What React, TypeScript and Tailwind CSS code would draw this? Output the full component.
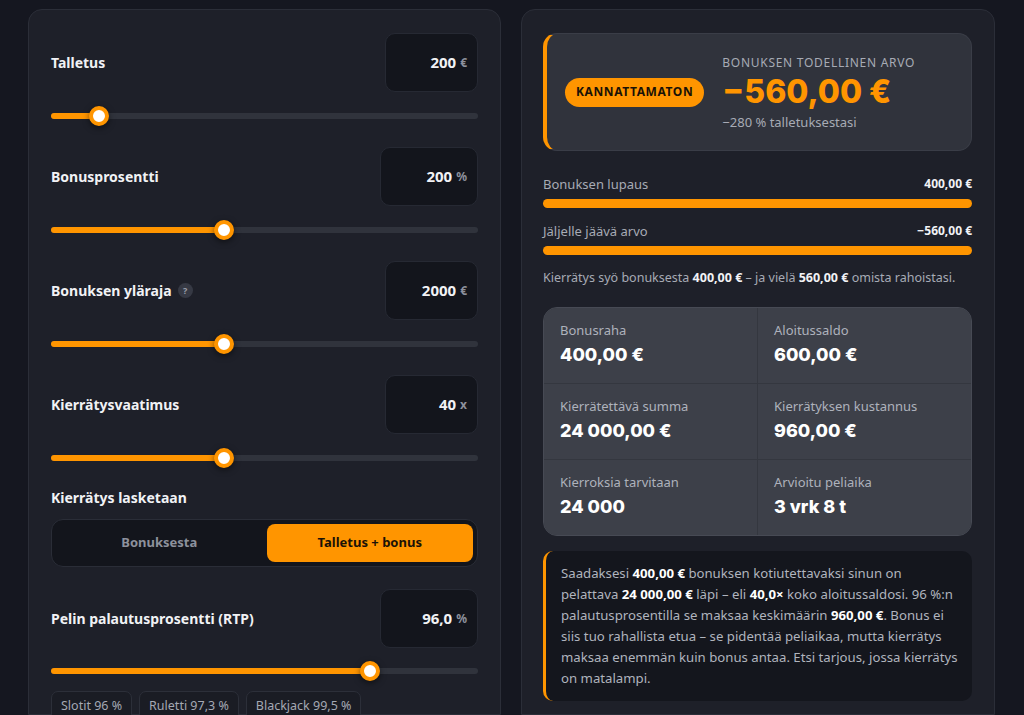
import { useState } from 'react'

type SliderField = {
  id: string
  label: string
  value: string
  unit: string
  pct: number
  boxW: string
  help?: boolean
}

const FIELDS: SliderField[] = [
  { id: 'deposit', label: 'Talletus', value: '200', unit: '€', pct: 11.2, boxW: 'w-[93px]' },
  { id: 'percent', label: 'Bonusprosentti', value: '200', unit: '%', pct: 40.5, boxW: 'w-[98px]' },
  { id: 'cap', label: 'Bonuksen yläraja', value: '2000', unit: '€', pct: 40.5, boxW: 'w-[93px]', help: true },
  { id: 'wager', label: 'Kierrätysvaatimus', value: '40', unit: 'x', pct: 40.5, boxW: 'w-[93px]' },
]

const RTP_FIELD: SliderField = { id: 'rtp', label: 'Pelin palautusprosentti (RTP)', value: '96,0', unit: '%', pct: 74.7, boxW: 'w-[98px]' }

const PRESETS = ['Slotit 96 %', 'Ruletti 97,3 %', 'Blackjack 99,5 %']

const STATS = [
  { label: 'Bonusraha', value: '400,00 €' },
  { label: 'Aloitussaldo', value: '600,00 €' },
  { label: 'Kierrätettävä summa', value: '24 000,00 €' },
  { label: 'Kierrätyksen kustannus', value: '960,00 €' },
  { label: 'Kierroksia tarvitaan', value: '24 000' },
  { label: 'Arvioitu peliaika', value: '3 vrk 8 t' },
]

function FieldRow({ f }: { f: SliderField }) {
  return (
    <div className="flex items-center justify-between">
      <div className="flex items-center gap-[6px] text-[14px] font-bold text-[#f1f2f5]">
        {f.label}
        {f.help && (
          <span className="flex h-[15px] w-[15px] items-center justify-center rounded-full bg-[#363944] text-[9px] font-bold text-[#9a9eaa]">
            ?
          </span>
        )}
      </div>
      <div className={`flex h-[59px] ${f.boxW} items-center justify-end gap-[4px] rounded-[10px] border border-[#262933] bg-[#13151c] pr-[10px]`}>
        <span className="text-[15px] font-bold text-[#f1f2f5]">{f.value}</span>
        <span className="text-[12px] font-bold text-[#8d919c]">{f.unit}</span>
      </div>
    </div>
  )
}

function Slider({ pct }: { pct: number }) {
  return (
    <div className="relative h-[12px]">
      <div className="absolute left-0 right-0 top-[3px] h-[6px] rounded-full bg-[#30333c]" />
      <div className="absolute left-0 top-[3px] h-[6px] rounded-full bg-[#ff9500]" style={{ width: `${pct}%` }} />
      <div
        className="absolute top-[-4px] h-[20px] w-[20px] -translate-x-1/2 rounded-full border-[4px] border-[#ff9500] bg-white shadow-[0_2px_6px_rgba(0,0,0,0.5)]"
        style={{ left: `${pct}%` }}
      />
    </div>
  )
}

export default function App() {
  const [mode, setMode] = useState<'bonus' | 'both'>('both')

  return (
    <div className="flex h-[715px] gap-[20px] overflow-hidden bg-[#151720] pl-[28px] pt-[9px] font-['Noto_Sans',sans-serif]">
      {/* Syötteet */}
      <div className="w-[473px] shrink-0 rounded-t-[14px] border border-[#2b2e38] bg-[#1e2029] px-[22px] pt-[23px]">
        {FIELDS.map((f, i) => (
          <div key={f.id} className={i > 0 ? 'mt-[25px]' : ''}>
            <FieldRow f={f} />
            <div className="mt-[18px]">
              <Slider pct={f.pct} />
            </div>
          </div>
        ))}

        <div className="mt-[24px] text-[14px] font-bold leading-[20px] text-[#f1f2f5]">Kierrätys lasketaan</div>
        <div className="mt-[11px] flex h-[48px] gap-[4px] rounded-[12px] border border-[#2a2d37] bg-[#13151c] p-[4px]">
          <button
            onClick={() => setMode('bonus')}
            className={`flex-1 rounded-[8px] text-[13px] font-bold ${mode === 'bonus' ? 'bg-[#ff9500] text-[#1a1207]' : 'text-[#8d919c]'}`}
          >
            Bonuksesta
          </button>
          <button
            onClick={() => setMode('both')}
            className={`flex-1 rounded-[8px] text-[13px] font-bold ${mode === 'both' ? 'bg-[#ff9500] text-[#1a1207]' : 'text-[#8d919c]'}`}
          >
            Talletus + bonus
          </button>
        </div>

        <div className="mt-[22px]">
          <FieldRow f={RTP_FIELD} />
          <div className="mt-[17px]">
            <Slider pct={RTP_FIELD.pct} />
          </div>
        </div>

        <div className="mt-[14px] flex gap-[7px]">
          {PRESETS.map(p => (
            <div key={p} className="rounded-[7px] border border-[#2c2f39] bg-[#1a1c24] px-[9px] py-[5px] text-[12.5px] text-[#a4a8b3]">
              {p}
            </div>
          ))}
        </div>
      </div>

      {/* Tulokset */}
      <div className="w-[474px] shrink-0 rounded-t-[14px] border border-[#2b2e38] bg-[#1e2029] pl-[21px] pr-[22px] pt-[23px]">
        <div className="flex h-[118px] items-center rounded-[14px] border border-[#3a3d47] border-l-[4px] border-l-[#ff9500] bg-[#30333c] pl-[18px]">
          <div className="flex h-[29px] items-center rounded-full bg-[#ff9500] px-[11px] text-[12px] font-bold tracking-[0.05em] text-[#1a1207]">
            KANNATTAMATON
          </div>
          <div className="ml-[18px] flex flex-col">
            <div className="text-[12px] leading-[16px] tracking-[0.06em] text-[#a7abb5]">BONUKSEN TODELLINEN ARVO</div>
            <div className="mt-[2px] font-['Inter',sans-serif] text-[32px] font-extrabold leading-[38px] text-[#ff9500]">−560,00 €</div>
            <div className="mt-[3px] text-[13px] leading-[16px] text-[#a7abb5]">−280 % talletuksestasi</div>
          </div>
        </div>

        <div className="mt-[24px] flex items-center justify-between leading-[18px]">
          <span className="text-[13px] text-[#a7abb5]">Bonuksen lupaus</span>
          <span className="text-[12px] font-bold text-[#f1f2f5]">400,00 €</span>
        </div>
        <div className="mt-[6px] h-[9px] rounded-full bg-[#ff9500]" />

        <div className="mt-[14px] flex items-center justify-between leading-[18px]">
          <span className="text-[13px] text-[#a7abb5]">Jäljelle jäävä arvo</span>
          <span className="text-[12px] font-bold text-[#f1f2f5]">−560,00 €</span>
        </div>
        <div className="mt-[6px] h-[9px] rounded-full bg-[#ff9500]" />

        <p className="mt-[13px] text-[12.5px] leading-[20px] text-[#a7abb5]">
          Kierrätys syö bonuksesta <b className="text-[#f1f2f5]">400,00&nbsp;€</b> – ja vielä <b className="text-[#f1f2f5]">560,00&nbsp;€</b> omista rahoistasi.
        </p>

        <div className="mt-[19px] grid grid-cols-2 gap-px overflow-hidden rounded-[14px] border border-[#474a54] bg-[#34373f]">
          {STATS.map(s => (
            <div key={s.label} className="h-[75px] bg-[#3d4049] pl-[16px] pt-[13px]">
              <div className="text-[13px] leading-[18px] text-[#aeb2bc]">{s.label}</div>
              <div className="mt-[4px] font-['Inter',sans-serif] text-[18px] font-extrabold leading-[24px] text-white">{s.value}</div>
            </div>
          ))}
        </div>

        <div className="mt-[15px] rounded-[10px] border-l-[3px] border-l-[#ff9500] bg-[#14161d] py-[12px] pl-[15px] pr-[12px] text-[13.2px] leading-[21px] text-[#b0b4be]">
          Saadaksesi <b className="text-white">400,00&nbsp;€</b> bonuksen kotiutettavaksi sinun on pelattava{' '}
          <b className="text-white">24&nbsp;000,00&nbsp;€</b> läpi – eli <b className="text-white">40,0×</b> koko aloitussaldosi. 96&nbsp;%:n
          palautusprosentilla se maksaa keskimäärin <b className="text-white">960,00&nbsp;€</b>. Bonus ei siis tuo rahallista etua – se
          pidentää peliaikaa, mutta kierrätys maksaa enemmän kuin bonus antaa. Etsi tarjous, jossa kierrätys on matalampi.
        </div>
      </div>
    </div>
  )
}
